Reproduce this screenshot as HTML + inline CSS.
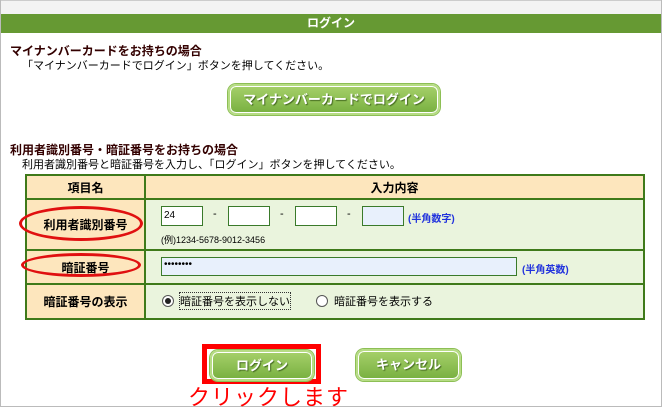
<!DOCTYPE html>
<html><head><meta charset="utf-8"><style>
*{margin:0;padding:0;box-sizing:border-box}
body{width:662px;height:407px;overflow:hidden;background:#fff;font-family:"Liberation Sans","Noto Sans CJK JP",sans-serif;position:relative;font-size:11px;color:#000}
.frame{position:absolute;left:0;top:0;width:662px;height:407px;border:1px solid #bbb;border-top:none}
.top{position:absolute;left:0;top:0;width:662px;height:14px;background:#f3f3f3;border-top:1px solid #ccc}
.bar{position:absolute;left:1px;top:14px;width:660px;height:19px;background:#669933;color:#fff;font-weight:bold;font-size:12px;text-align:center;line-height:19px}
.h{position:absolute;left:10px;font-weight:bold;font-size:12px;color:#330000}
.t{position:absolute;left:22px;font-size:11px}
.btn{position:absolute;border-radius:8px;background:linear-gradient(#a6d06a,#78b040);border:2px solid #b6dc84;box-shadow:inset 0 0 0 1px #fff,0 0 0 1px #8dbf55;color:#fff;font-weight:bold;font-size:13px;text-align:center;text-shadow:1px 1px 1px #456a20}
table{position:absolute;left:25px;top:174px;width:620px;border-collapse:collapse}
td{border:2px solid #3f7a1a;font-size:12px}
td.l{background:#fde6bd;text-align:center;font-weight:bold;width:119px}
td.r{background:#eaf4dd}
.in{position:absolute;height:20px;border:1px solid #3a7a2a;background:#fff;font-size:10px;padding-left:2px;line-height:18px}
.blue{position:absolute;color:#2233dd;font-weight:bold;font-size:10px}
.oval{position:absolute;border:3px solid #e01010;border-radius:50%}
</style></head><body>
<div class="top"></div>
<div class="bar">ログイン</div>
<div class="frame"></div>
<div class="h" style="top:42px">マイナンバーカードをお持ちの場合</div>
<div class="t" style="top:57px">「マイナンバーカードでログイン」ボタンを押してください。</div>
<div class="btn" style="left:228px;top:84px;width:212px;height:31px;line-height:27px">マイナンバーカードでログイン</div>
<div class="h" style="top:141px">利用者識別番号・暗証番号をお持ちの場合</div>
<div class="t" style="top:156px">利用者識別番号と暗証番号を入力し、「ログイン」ボタンを押してください。</div>
<table>
<tr style="height:24px"><td class="l">項目名</td><td class="r" style="background:#fde6bd;text-align:center;font-weight:bold">入力内容</td></tr>
<tr style="height:51px"><td class="l">利用者識別番号</td><td class="r"></td></tr>
<tr style="height:34px"><td class="l">暗証番号</td><td class="r"></td></tr>
<tr style="height:35px"><td class="l">暗証番号の表示</td><td class="r"></td></tr>
</table>
<div class="in" style="left:161px;top:206px;width:42px">24</div>
<div style="position:absolute;left:213px;top:208px">-</div>
<div class="in" style="left:228px;top:206px;width:42px"></div>
<div style="position:absolute;left:280px;top:208px">-</div>
<div class="in" style="left:295px;top:206px;width:42px"></div>
<div style="position:absolute;left:347px;top:208px">-</div>
<div class="in" style="left:362px;top:206px;width:42px;background:#e8f0fc"></div>
<div class="blue" style="left:408px;top:210px">(半角数字)</div>
<div style="position:absolute;left:161px;top:233px;font-size:9px">(例)1234-5678-9012-3456</div>
<div class="in" style="left:161px;top:257px;width:356px;height:19px;background:#e8f0fc;line-height:14px">••••••••</div>
<div class="blue" style="left:522px;top:261px">(半角英数)</div>
<div style="position:absolute;left:162px;top:295px;width:12px;height:12px;border:1px solid #555;border-radius:50%;background:#fff"><div style="margin:2px;width:6px;height:6px;border-radius:50%;background:#222"></div></div>
<div style="position:absolute;left:180px;top:293px;font-size:11px;outline:1px dotted #333">暗証番号を表示しない</div>
<div style="position:absolute;left:316px;top:295px;width:12px;height:12px;border:1px solid #555;border-radius:50%;background:#fff"></div>
<div style="position:absolute;left:334px;top:293px;font-size:11px">暗証番号を表示する</div>
<div class="oval" style="left:19px;top:206px;width:124px;height:35px"></div>
<div class="oval" style="left:21px;top:253px;width:120px;height:24px"></div>
<div style="position:absolute;left:202px;top:344px;width:119px;height:40px;border:5px solid #f00"></div>
<div class="btn" style="left:210px;top:350px;width:104px;height:31px;line-height:27px">ログイン</div>
<div class="btn" style="left:356px;top:349px;width:105px;height:32px;line-height:28px">キャンセル</div>
<div style="position:absolute;left:188px;top:380px;color:#f00;font-size:22px;font-family:'Liberation Sans','Noto Sans CJK JP',sans-serif;letter-spacing:1px">クリックします</div>
</body></html>
